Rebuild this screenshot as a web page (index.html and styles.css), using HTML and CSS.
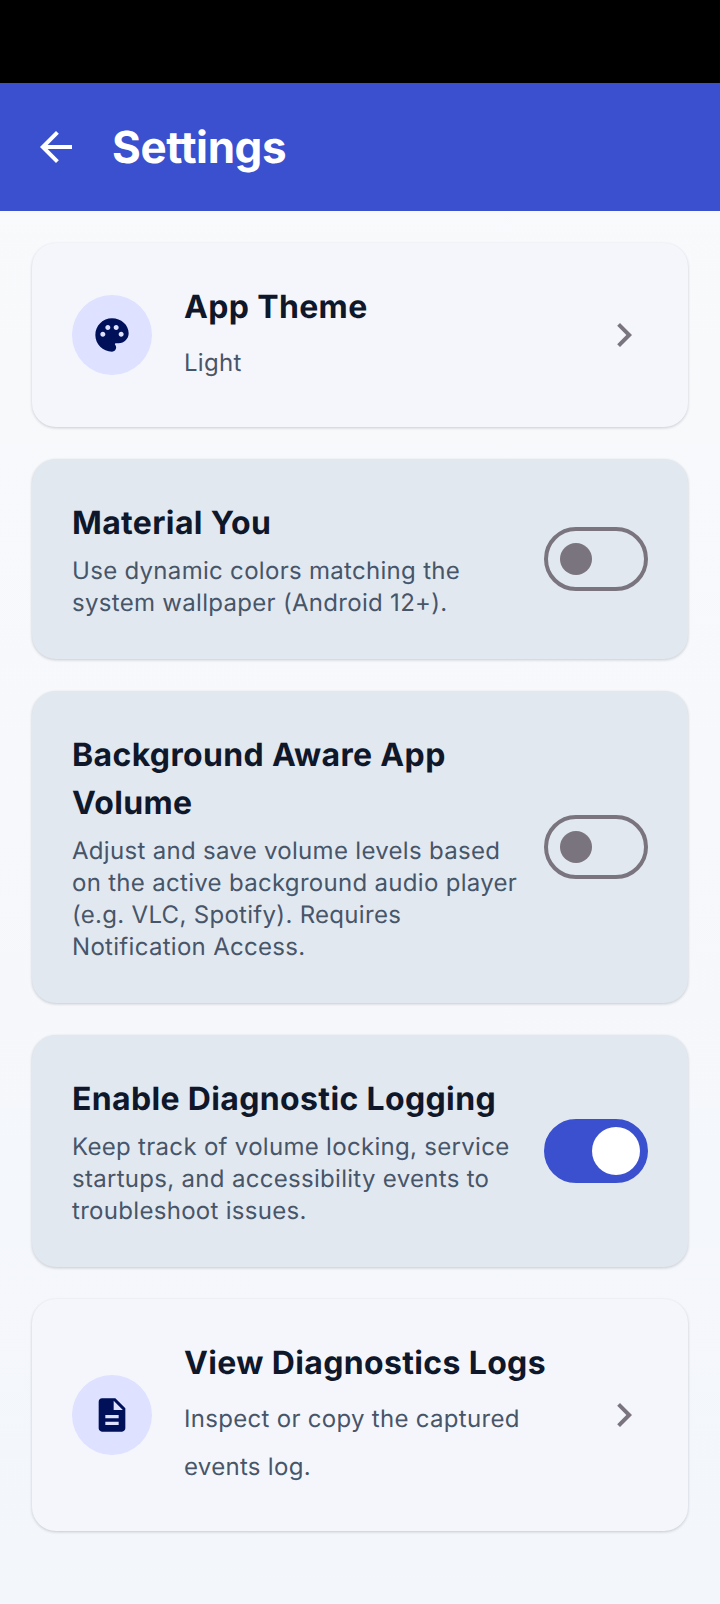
FILE: index.html
```html
<!DOCTYPE html>
<html lang="en">
<head>
  <meta charset="UTF-8" />
  <meta name="viewport" content="width=device-width, initial-scale=1.0"/>
  <title>Settings</title>
  <link rel="stylesheet" href="styles.css">
</head>
<body>
  <div class="status-bar"></div>

  <header class="app-bar">
    <svg class="back-icon" viewBox="0 0 24 24"><path d="M20 11H7.83l5.59-5.59L12 4l-8 8 8 8 1.41-1.41L7.83 13H20v-2z"/></svg>
    <h1>Settings</h1>
  </header>

  <main class="content">
    <section class="card card-light">
      <div class="icon-circle">
        <svg viewBox="0 0 24 24"><path d="M12 2C6.49 2 2 6.49 2 12s4.49 10 10 10c1.38 0 2.5-1.12 2.5-2.5 0-.61-.23-1.2-.64-1.67-.08-.1-.13-.21-.13-.33 0-.28.22-.5.5-.5H16c3.31 0 6-2.69 6-6 0-4.96-4.49-9-10-9zm5.5 11c-.83 0-1.5-.67-1.5-1.5s.67-1.5 1.5-1.5 1.5.67 1.5 1.5-.67 1.5-1.5 1.5zm-3-4c-.83 0-1.5-.67-1.5-1.5S13.67 6 14.5 6s1.5.67 1.5 1.5S15.33 9 14.5 9zM5 11.5c0-.83.67-1.5 1.5-1.5S8 10.67 8 11.5 7.33 13 6.5 13 5 12.33 5 11.5zm6-4c0 .83-.67 1.5-1.5 1.5S8 8.33 8 7.5 8.67 6 9.5 6s1.5.67 1.5 1.5z"/></svg>
      </div>
      <div class="card-text">
        <h2>App Theme</h2>
        <p class="nav-sub">Light</p>
      </div>
      <svg class="chevron" viewBox="0 0 24 24"><path d="M10 6L8.59 7.41 13.17 12l-4.58 4.59L10 18l6-6z"/></svg>
    </section>

    <section class="card card-dim">
      <div class="card-text">
        <h2>Material You</h2>
        <p>Use dynamic colors matching the system wallpaper (Android 12+).</p>
      </div>
      <div class="switch"><span class="thumb"></span></div>
    </section>

    <section class="card card-dim">
      <div class="card-text">
        <h2>Background Aware App Volume</h2>
        <p>Adjust and save volume levels based on the active background audio player (e.g. VLC, Spotify). Requires Notification Access.</p>
      </div>
      <div class="switch"><span class="thumb"></span></div>
    </section>

    <section class="card card-dim">
      <div class="card-text">
        <h2>Enable Diagnostic Logging</h2>
        <p>Keep track of volume locking, service startups, and accessibility events to troubleshoot issues.</p>
      </div>
      <div class="switch switch-on"><span class="thumb"></span></div>
    </section>

    <section class="card card-light">
      <div class="icon-circle">
        <svg viewBox="0 0 24 24"><path d="M14 2H6c-1.1 0-1.99.9-1.99 2L4 20c0 1.1.89 2 1.99 2H18c1.1 0 2-.9 2-2V8l-6-6zm2 16H8v-2h8v2zm0-4H8v-2h8v2zm-3-5V3.5L18.5 9H13z"/></svg>
      </div>
      <div class="card-text">
        <h2>View Diagnostics Logs</h2>
        <p class="nav-sub">Inspect or copy the captured events log.</p>
      </div>
      <svg class="chevron" viewBox="0 0 24 24"><path d="M10 6L8.59 7.41 13.17 12l-4.58 4.59L10 18l6-6z"/></svg>
    </section>
  </main>
</body>
</html>
```

FILE: styles.css
```css
body {
  margin: 0;
  height: 1604px;
  overflow: hidden;
  font-family: Inter, "Noto Sans", sans-serif;
  text-rendering: geometricPrecision;
  background: linear-gradient(180deg, #f9fafc 0%, #f3f6fb 100%);
}

.status-bar {
  height: 83px;
  background-color: #000000;
}

.app-bar {
  height: 128px;
  display: flex;
  align-items: center;
  gap: 32px;
  padding: 0 32px;
  background-color: #3b50ce;
}

.back-icon {
  width: 48px;
  height: 48px;
  fill: #ffffff;
}

.app-bar h1 {
  margin: 0;
  font-size: 44px;
  line-height: 48px;
  font-weight: 700;
  letter-spacing: -0.4px;
  color: #ffffff;
}

.content {
  display: flex;
  flex-direction: column;
  gap: 32px;
  padding: 32px;
}

.card {
  display: flex;
  align-items: center;
  padding: 40px;
  border-radius: 24px;
  box-shadow: 0 1px 3px rgba(15, 23, 42, 0.2);
}

.card-light {
  gap: 32px;
  background-color: #f5f6fc;
}

.card-dim {
  gap: 24px;
  background-color: #e2e8f0;
}

.card-text {
  flex: 1;
  min-width: 0;
}

.card-text h2 {
  margin: 0 0 8px;
  font-size: 32px;
  line-height: 48px;
  font-weight: 700;
  letter-spacing: 0.35px;
  color: #0f172a;
}

.card-text p {
  margin: 0;
  font-size: 24px;
  line-height: 32px;
  letter-spacing: 0.3px;
  color: #475569;
}

.card-text .nav-sub {
  line-height: 48px;
}

.icon-circle {
  width: 80px;
  height: 80px;
  flex-shrink: 0;
  display: flex;
  align-items: center;
  justify-content: center;
  border-radius: 50%;
  background-color: #dee1ff;
}

.icon-circle svg {
  width: 40px;
  height: 40px;
  fill: #00115a;
}

.chevron {
  width: 48px;
  height: 48px;
  flex-shrink: 0;
  fill: #79747e;
}

.switch {
  width: 104px;
  height: 64px;
  flex-shrink: 0;
  box-sizing: border-box;
  display: flex;
  align-items: center;
  padding-left: 12px;
  border: 4px solid #79747e;
  border-radius: 32px;
}

.thumb {
  width: 32px;
  height: 32px;
  border-radius: 50%;
  background-color: #79747e;
}

.switch-on {
  justify-content: flex-end;
  padding: 0 4px;
  border-color: #3b50ce;
  background-color: #3b50ce;
}

.switch-on .thumb {
  width: 48px;
  height: 48px;
  background-color: #ffffff;
}
```
